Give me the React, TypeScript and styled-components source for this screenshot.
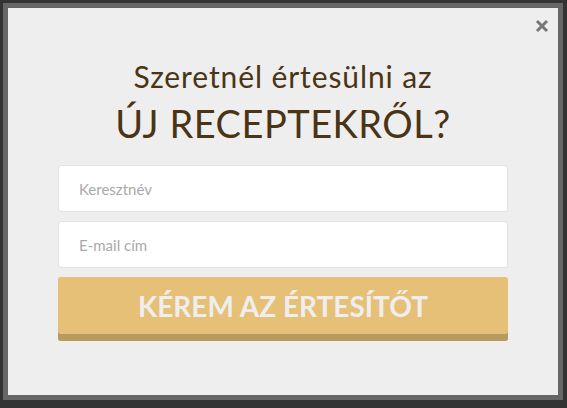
import styled, { createGlobalStyle } from 'styled-components';

const GlobalStyle = createGlobalStyle`
  html, body {
    margin: 0;
    padding: 0;
    background: #333333;
  }
  * {
    box-sizing: border-box;
  }
`;

const Frame = styled.div`
  width: 567px;
  height: 408px;
  padding: 3px 4px 8px 3px;
`;

const Modal = styled.div`
  position: relative;
  height: 100%;
  background: #eeeeee;
  border: 5px solid #666666;
  display: flex;
  flex-direction: column;
  align-items: center;
  padding-top: 52px;
`;

const CloseButton = styled.button`
  position: absolute;
  top: 11px;
  right: 9px;
  width: 14px;
  height: 14px;
  padding: 0;
  border: none;
  background: none;
  cursor: pointer;
  display: flex;
`;

const Heading = styled.h1`
  margin: 0;
  text-align: center;
  color: #4a3416;
  font-family: Lato, 'Open Sans', sans-serif;
  font-weight: 400;
`;

const SubLine = styled.span`
  display: block;
  font-size: 30px;
  line-height: 32px;
  letter-spacing: 0.9px;
`;

const MainLine = styled.span`
  display: block;
  margin-top: 10px;
  font-size: 38px;
  line-height: 42px;
  letter-spacing: 0.5px;
  text-transform: uppercase;
`;

const Form = styled.form`
  width: 450px;
  margin-top: 21px;
  display: flex;
  flex-direction: column;
  gap: 9px;
`;

const Field = styled.input`
  width: 100%;
  height: 47px;
  padding: 0 20px;
  background: #ffffff;
  border: 1px solid #e2e2e2;
  border-radius: 3px;
  font-family: Lato, 'Open Sans', sans-serif;
  font-size: 15px;
  color: #555;
  outline: none;

  &::placeholder {
    color: #a9a9a9;
  }
`;

const Submit = styled.button`
  width: 100%;
  height: 64px;
  border: none;
  border-radius: 3px;
  background: #e6c076;
  box-shadow: inset 0 -7px 0 #b89a5e;
  padding-bottom: 7px;
  color: #eeeeee;
  font-family: Lato, 'Open Sans', sans-serif;
  font-weight: 700;
  font-size: 28px;
  cursor: pointer;
`;

const CloseIcon = () => (
  <svg width="14" height="14" viewBox="0 0 14 14">
    <path
      d="M2 2 L12 12 M12 2 L2 12"
      stroke="#777777"
      strokeWidth="3"
      strokeLinecap="butt"
    />
  </svg>
);

export default function App() {
  return (
    <>
      <GlobalStyle />
      <Frame>
        <Modal>
          <CloseButton aria-label="Bezárás">
            <CloseIcon />
          </CloseButton>
          <Heading>
            <SubLine>Szeretnél értesülni az</SubLine>
            <MainLine>Új receptekről?</MainLine>
          </Heading>
          <Form onSubmit={(e) => e.preventDefault()}>
            <Field type="text" placeholder="Keresztnév" />
            <Field type="email" placeholder="E-mail cím" />
            <Submit type="submit">KÉREM AZ ÉRTESÍTŐT</Submit>
          </Form>
        </Modal>
      </Frame>
    </>
  );
}
